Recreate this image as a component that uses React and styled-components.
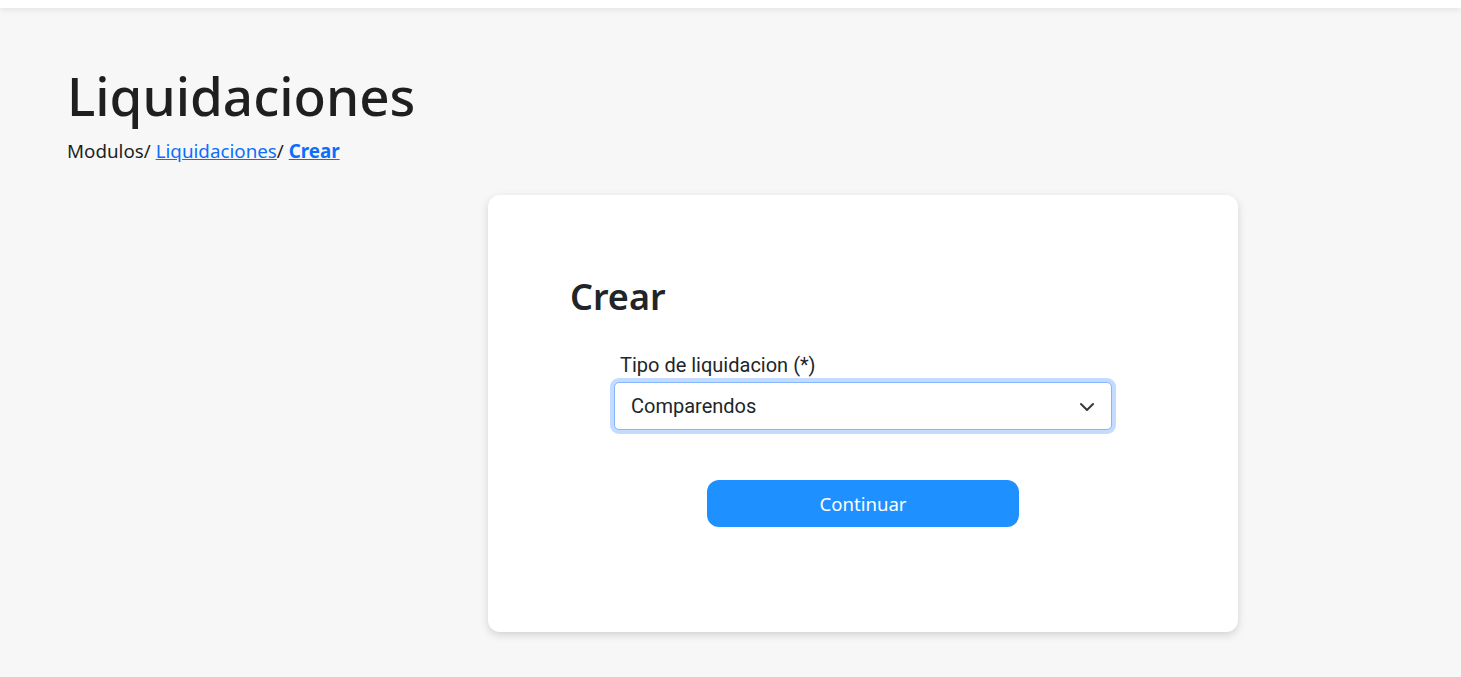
import React, { useState } from "react";
import styled, { createGlobalStyle } from "styled-components";

const GlobalStyle = createGlobalStyle`
  html, body {
    margin: 0;
    padding: 0;
    background: #f7f7f7;
    font-family: "Noto Sans", "Open Sans", sans-serif;
    color: #212529;
  }
  * { box-sizing: border-box; }
`;

const TopBar = styled.div`
  height: 8px;
  background: #fff;
  box-shadow: 0 2px 6px rgba(0, 0, 0, 0.08);
`;

const Page = styled.main`
  padding: 55px 67px 40px;
`;

const Title = styled.h1`
  margin: 0;
  font-size: 53px;
  font-weight: 500;
  line-height: 66px;
  color: #1f1f1f;
`;

const Breadcrumb = styled.nav`
  margin-top: 10px;
  font-size: 18.8px;
  line-height: 24px;
  color: #1f1f1f;
`;

const Crumb = styled.a`
  color: #0d6efd;
  text-decoration: underline;
  font-weight: ${(p) => (p.$active ? 700 : 400)};
  cursor: pointer;
`;

const Card = styled.section`
  margin: 32px 0 0 421px;
  width: 750px;
  height: 437px;
  background: #fff;
  border-radius: 12px;
  box-shadow: 0 3px 8px rgba(0, 0, 0, 0.15);
  padding: 78px 82px 0;
`;

const CardTitle = styled.h2`
  margin: 0;
  font-size: 36px;
  font-weight: 600;
  line-height: 48px;
  color: #212529;
`;

const Form = styled.form`
  display: flex;
  flex-direction: column;
  align-items: center;
  margin-top: 31px;
`;

const Field = styled.div`
  width: 498px;
  display: flex;
  flex-direction: column;
`;

const Label = styled.label`
  font-family: Roboto, sans-serif;
  font-size: 20px;
  line-height: 26px;
  margin-left: 6px;
  margin-bottom: 4px;
  color: #212529;
`;

const SelectWrap = styled.div`
  position: relative;
  height: 48px;
`;

const Select = styled.select`
  appearance: none;
  width: 100%;
  height: 100%;
  padding: 0 40px 0 16px;
  font-family: Roboto, sans-serif;
  font-size: 20px;
  color: #212529;
  background: #fff;
  border: 1px solid #86b7fe;
  border-radius: 5px;
  outline: none;
  box-shadow: 0 0 0 4px rgba(13, 110, 253, 0.25);
`;

const Chevron = styled.svg`
  position: absolute;
  right: 17px;
  top: 17px;
  pointer-events: none;
`;

const Button = styled.button`
  margin-top: 50px;
  width: 312px;
  height: 47px;
  border: none;
  border-radius: 12px;
  background: #1e90ff;
  color: #fff;
  font-family: "Noto Sans", "Open Sans", sans-serif;
  font-size: 18.6px;
  cursor: pointer;
`;

export default function App() {
  const [tipo, setTipo] = useState("comparendos");
  return (
    <>
      <GlobalStyle />
      <TopBar />
      <Page>
        <Title>Liquidaciones</Title>
        <Breadcrumb>
          Modulos/ <Crumb>Liquidaciones</Crumb>/ <Crumb $active>Crear</Crumb>
        </Breadcrumb>
        <Card>
          <CardTitle>Crear</CardTitle>
          <Form onSubmit={(e) => e.preventDefault()}>
            <Field>
              <Label htmlFor="tipo">Tipo de liquidacion (*)</Label>
              <SelectWrap>
                <Select id="tipo" value={tipo} onChange={(e) => setTipo(e.target.value)}>
                  <option value="comparendos">Comparendos</option>
                  <option value="impuestos">Impuestos</option>
                </Select>
                <Chevron width="16" height="16" viewBox="0 0 16 16" fill="none">
                  <path d="M2 5l6 6 6-6" stroke="#343a40" strokeWidth="2" strokeLinecap="round" strokeLinejoin="round" />
                </Chevron>
              </SelectWrap>
            </Field>
            <Button type="submit">Continuar</Button>
          </Form>
        </Card>
      </Page>
    </>
  );
}
